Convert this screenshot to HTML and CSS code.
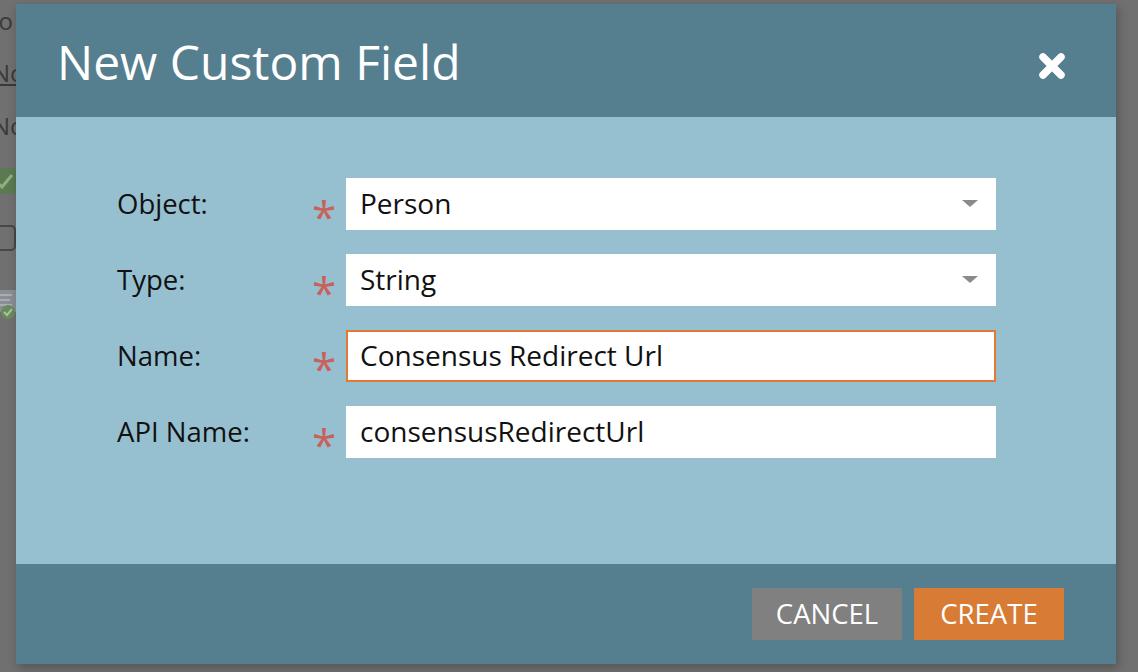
FILE: index.html
```html
<!DOCTYPE html>
<html lang="en">
<head>
<meta charset="utf-8">
<title>New Custom Field</title>
<link rel="stylesheet" href="styles.css">
</head>
<body>
<div class="page">
  <div class="bg-line bg-first">Info</div>
  <div class="bg-line bg-link">None</div>
  <div class="bg-line bg-third">None</div>
  <div class="bg-icon bg-check">
    <svg width="24" height="26" viewBox="0 0 24 26"><rect x="0" y="0" width="24" height="26" rx="4" fill="#5b7a52"/><path d="M5 14 L10 19 L20 7" stroke="#8fb07f" stroke-width="3" fill="none"/></svg>
  </div>
  <div class="bg-icon bg-box"></div>
  <div class="bg-icon bg-doc">
    <svg width="24" height="30" viewBox="0 0 24 30"><rect x="0" y="0" width="24" height="22" fill="#8a8f95"/><path d="M2 5 H20 M2 10 H18 M2 15 H20" stroke="#a8adb2" stroke-width="2"/><circle cx="16" cy="22" r="7" fill="#6a8a5e"/><path d="M12 22 L15 25 L20 19" stroke="#a9c39c" stroke-width="2" fill="none"/></svg>
  </div>
</div>

<div class="overlay">
  <div class="dialog">
    <div class="dialog-header">
      <h1 class="dialog-title">New Custom Field</h1>
      <button class="close-btn" aria-label="Close">
        <svg width="32" height="32" viewBox="0 0 32 32"><path d="M7 7 L25 25 M25 7 L7 25" stroke="#ffffff" stroke-width="7.5" stroke-linecap="round"/></svg>
      </button>
    </div>
    <div class="dialog-body">
      <div class="form-row">
        <label class="field-label">Object:</label>
        <span class="required">*</span>
        <div class="field select">
          <span class="field-text">Person</span>
          <span class="caret"></span>
        </div>
      </div>
      <div class="form-row">
        <label class="field-label">Type:</label>
        <span class="required">*</span>
        <div class="field select">
          <span class="field-text">String</span>
          <span class="caret"></span>
        </div>
      </div>
      <div class="form-row">
        <label class="field-label">Name:</label>
        <span class="required">*</span>
        <div class="field focused">
          <span class="field-text">Consensus Redirect Url</span>
        </div>
      </div>
      <div class="form-row">
        <label class="field-label">API Name:</label>
        <span class="required">*</span>
        <div class="field">
          <span class="field-text">consensusRedirectUrl</span>
        </div>
      </div>
    </div>
    <div class="dialog-footer">
      <button class="btn btn-cancel">CANCEL</button>
      <button class="btn btn-create">CREATE</button>
    </div>
  </div>
</div>
</body>
</html>
```

FILE: styles.css
```css
html, body {
  margin: 0;
  padding: 0;
}

body {
  width: 1138px;
  height: 672px;
  overflow: hidden;
  background: #707070;
  font-family: "Open Sans", "Noto Sans", sans-serif;
  position: relative;
}

.page {
  display: flex;
  flex-direction: column;
  align-items: flex-start;
  padding-top: 8px;
  color: #3a3a3a;
  font-size: 24px;
}

.bg-line {
  height: 26px;
  line-height: 26px;
  white-space: nowrap;
  margin-left: -8px;
}

.bg-first {
  margin-left: -31px;
}

.bg-link {
  margin-top: 26px;
  text-decoration: underline;
}

.bg-third {
  margin-top: 27px;
}

.bg-icon {
  margin-left: -8px;
}

.bg-check {
  margin-top: 29px;
  height: 26px;
}

.bg-box {
  margin-top: 31px;
  margin-left: -10px;
  width: 22px;
  height: 22px;
  border: 2px solid #474747;
  border-radius: 5px;
}

.bg-doc {
  margin-top: 39px;
}

.overlay {
  position: absolute;
  left: 16px;
  top: 4px;
}

.dialog {
  width: 1100px;
  height: 660px;
  display: flex;
  flex-direction: column;
  box-shadow: 2px 4px 10px rgba(0, 0, 0, 0.25);
}

.dialog-header {
  height: 113px;
  background: #557e8f;
  display: flex;
  align-items: center;
  justify-content: space-between;
  padding: 0 48px 0 41px;
  box-sizing: border-box;
}

.dialog-title {
  margin: 0;
  color: #ffffff;
  font-weight: 400;
  font-size: 48px;
  line-height: 1;
  padding-top: 2px;
}

.close-btn {
  background: none;
  border: 0;
  padding: 0;
  width: 32px;
  height: 32px;
  display: flex;
  margin-top: 11px;
}

.dialog-body {
  flex: 1;
  background: #96c0d0;
  padding: 61px 120px 0 101px;
  display: flex;
  flex-direction: column;
  gap: 24px;
}

.form-row {
  display: flex;
  align-items: center;
  height: 52px;
}

.field-label {
  width: 195px;
  font-size: 27.5px;
  color: #111;
  padding-bottom: 2px;
}

.required {
  width: 34px;
  color: #c9605a;
  font-size: 44px;
  line-height: 1;
  padding-top: 24px;
  box-sizing: border-box;
}

.field {
  flex: 1;
  height: 52px;
  background: #ffffff;
  box-sizing: border-box;
  display: flex;
  align-items: center;
  padding: 0 18px 0 14px;
}

.field.focused {
  border: 2px solid #e07a34;
  padding-left: 12px;
}

.field-text {
  flex: 1;
  font-size: 28px;
  color: #111;
  padding-bottom: 2px;
}

.caret {
  width: 0;
  height: 0;
  border-left: 8px solid transparent;
  border-right: 8px solid transparent;
  border-top: 7px solid #8a8a8a;
  margin-bottom: 2px;
}

.dialog-footer {
  height: 100px;
  background: #557e8f;
  display: flex;
  justify-content: flex-end;
  align-items: center;
  gap: 12px;
  padding-right: 52px;
  box-sizing: border-box;
}

.btn {
  width: 150px;
  height: 52px;
  border: 0;
  color: #ffffff;
  font-family: "Open Sans", "Noto Sans", sans-serif;
  font-size: 27.5px;
  padding: 0 0 2px 0;
}

.btn-cancel {
  background: #808080;
}

.btn-create {
  background: #d87b35;
}
```
